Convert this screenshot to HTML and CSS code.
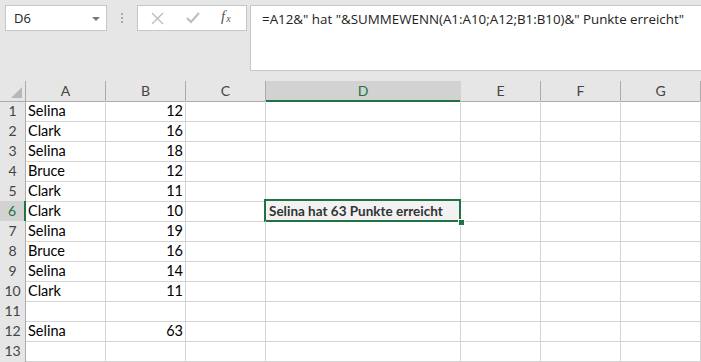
FILE: index.html
```html
<!DOCTYPE html>
<html lang="de">
<head>
    <meta charset="UTF-8">
    <title>SUMMEWENN</title>
    <link rel="stylesheet" href="styles.css">
</head>
<body>
    <div class="toolbar">
        <div class="name-box">
            <span>D6</span>
            <span class="drop"></span>
        </div>
        <div class="grip"><i></i><i></i><i></i></div>
        <div class="buttons">
            <svg class="btn-x" width="13" height="13" viewBox="0 0 13 13"><path d="M1 1 L12 12 M12 1 L1 12" stroke="#bdbdbd" stroke-width="1.4" fill="none"/></svg>
            <svg class="btn-ok" width="14" height="12" viewBox="0 0 14 12"><path d="M1 6 L5 10 L13 1" stroke="#bdbdbd" stroke-width="2" fill="none"/></svg>
            <span class="fx">f<sub>x</sub></span>
        </div>
        <div class="formula">=A12&amp;" hat "&amp;SUMMEWENN(A1:A10;A12;B1:B10)&amp;" Punkte erreicht"</div>
    </div>

    <div class="sheet">
        <div class="row head">
            <div class="corner"><span></span></div>
            <div class="col">A</div><div class="col">B</div><div class="col">C</div>
            <div class="col active">D</div>
            <div class="col">E</div><div class="col">F</div><div class="col">G</div>
        </div>
        <div class="row"><div class="num">1</div><div class="cell">Selina</div><div class="cell n">12</div><div class="cell"></div><div class="cell"></div><div class="cell"></div><div class="cell"></div><div class="cell"></div></div>
        <div class="row"><div class="num">2</div><div class="cell">Clark</div><div class="cell n">16</div><div class="cell"></div><div class="cell"></div><div class="cell"></div><div class="cell"></div><div class="cell"></div></div>
        <div class="row"><div class="num">3</div><div class="cell">Selina</div><div class="cell n">18</div><div class="cell"></div><div class="cell"></div><div class="cell"></div><div class="cell"></div><div class="cell"></div></div>
        <div class="row"><div class="num">4</div><div class="cell">Bruce</div><div class="cell n">12</div><div class="cell"></div><div class="cell"></div><div class="cell"></div><div class="cell"></div><div class="cell"></div></div>
        <div class="row"><div class="num">5</div><div class="cell">Clark</div><div class="cell n">11</div><div class="cell"></div><div class="cell"></div><div class="cell"></div><div class="cell"></div><div class="cell"></div></div>
        <div class="row"><div class="num active">6</div><div class="cell">Clark</div><div class="cell n">10</div><div class="cell"></div><div class="cell selected">Selina hat 63 Punkte erreicht<span class="handle"></span></div><div class="cell"></div><div class="cell"></div><div class="cell"></div></div>
        <div class="row"><div class="num">7</div><div class="cell">Selina</div><div class="cell n">19</div><div class="cell"></div><div class="cell"></div><div class="cell"></div><div class="cell"></div><div class="cell"></div></div>
        <div class="row"><div class="num">8</div><div class="cell">Bruce</div><div class="cell n">16</div><div class="cell"></div><div class="cell"></div><div class="cell"></div><div class="cell"></div><div class="cell"></div></div>
        <div class="row"><div class="num">9</div><div class="cell">Selina</div><div class="cell n">14</div><div class="cell"></div><div class="cell"></div><div class="cell"></div><div class="cell"></div><div class="cell"></div></div>
        <div class="row"><div class="num">10</div><div class="cell">Clark</div><div class="cell n">11</div><div class="cell"></div><div class="cell"></div><div class="cell"></div><div class="cell"></div><div class="cell"></div></div>
        <div class="row"><div class="num">11</div><div class="cell"></div><div class="cell n"></div><div class="cell"></div><div class="cell"></div><div class="cell"></div><div class="cell"></div><div class="cell"></div></div>
        <div class="row"><div class="num">12</div><div class="cell">Selina</div><div class="cell n">63</div><div class="cell"></div><div class="cell"></div><div class="cell"></div><div class="cell"></div><div class="cell"></div></div>
        <div class="row"><div class="num">13</div><div class="cell"></div><div class="cell n"></div><div class="cell"></div><div class="cell"></div><div class="cell"></div><div class="cell"></div><div class="cell"></div></div>
        <div class="row"><div class="num"></div><div class="cell"></div><div class="cell n"></div><div class="cell"></div><div class="cell"></div><div class="cell"></div><div class="cell"></div><div class="cell"></div></div>
    </div>
</body>
</html>
```

FILE: styles.css
```css
body {
    margin: 0;
    width: 701px;
    height: 362px;
    overflow: hidden;
    background: #fff;
    font-family: Lato, "Liberation Sans", sans-serif;
}

* {
    box-sizing: border-box;
}

/* top bar with name box and formula */
.toolbar {
    display: flex;
    align-items: flex-start;
    height: 81px;
    padding: 5px 0 0 5px;
    background: #e6e6e6;
}

.name-box {
    display: flex;
    align-items: center;
    justify-content: space-between;
    width: 102px;
    height: 26px;
    padding: 0 6px 0 8px;
    background: #fff;
    border: 1px solid #c6c6c6;
    font-family: "Open Sans", sans-serif;
    font-size: 13px;
    color: #222;
}

.drop {
    width: 0;
    height: 0;
    border-left: 4px solid transparent;
    border-right: 4px solid transparent;
    border-top: 4px solid #777;
    margin-top: 1px;
}

.grip {
    display: flex;
    flex-direction: column;
    align-items: center;
    gap: 2px;
    width: 30px;
    padding-top: 8px;
}

.grip i {
    width: 2px;
    height: 2px;
    background: #a9a9a9;
}

.buttons {
    display: flex;
    align-items: center;
    width: 110px;
    height: 26px;
    padding-left: 13px;
    background: #fff;
    border: 1px solid #c6c6c6;
}

.btn-x {
    margin-right: 22px;
}

.btn-ok {
    margin-right: 21px;
}

.fx {
    font-family: "Liberation Serif", serif;
    font-style: italic;
    font-size: 15px;
    color: #555;
    margin-top: -4px;
}

.fx sub {
    font-size: 10px;
    vertical-align: -1px;
    margin-left: 1px;
}

.formula {
    flex: 1;
    height: 66px;
    margin-left: 3px;
    padding: 4px 0 0 11px;
    background: #fff;
    border: 1px solid #c6c6c6;
    border-right: none;
    font-family: "Open Sans", sans-serif;
    font-size: 13.35px;
    color: #222;
}

/* grid */
.row {
    display: grid;
    grid-template-columns: 26px 80px 80px 80px 195px 80px 80px 80px;
    height: 20px;
}

.head {
    background: #e6e6e6;
}

.corner {
    position: relative;
    border-right: 1px solid #ababab;
    border-bottom: 1px solid #ababab;
}

.corner span {
    position: absolute;
    right: 3px;
    bottom: 3px;
    width: 0;
    height: 0;
    border-left: 11px solid transparent;
    border-bottom: 11px solid #b7b7b7;
}

.col {
    text-align: center;
    line-height: 19px;
    font-size: 14px;
    color: #444;
    border-right: 1px solid #ababab;
    border-bottom: 1px solid #ababab;
}

.col.active {
    background: #d2d2d2;
    color: #217346;
    border-bottom: 2px solid #217346;
    border-right-color: #d2d2d2;
}

.num {
    background: #e6e6e6;
    text-align: center;
    line-height: 20px;
    font-size: 14px;
    color: #444;
    border-right: 1px solid #ababab;
    border-bottom: 1px solid #c8c8c8;
}

.num.active {
    background: #d2d2d2;
    color: #217346;
    border-right: 2px solid #217346;
}

.cell {
    position: relative;
    padding: 0 2px;
    line-height: 20px;
    font-size: 14.5px;
    color: #000;
    white-space: nowrap;
    border-right: 1px solid #d4d4d4;
    border-bottom: 1px solid #d4d4d4;
}

.cell.n {
    text-align: right;
}

.cell.selected {
    background: #f2f2f2;
    font-weight: bold;
    font-size: 13.5px;
    color: #333;
    padding-left: 3px;
}

.cell.selected::after {
    content: "";
    position: absolute;
    top: -2px;
    left: -2px;
    right: -1px;
    bottom: -1px;
    border: 2px solid #217346;
}

.handle {
    position: absolute;
    right: -5px;
    bottom: -5px;
    width: 7px;
    height: 7px;
    background: #217346;
    border: 1px solid #fff;
    z-index: 1;
}
```
